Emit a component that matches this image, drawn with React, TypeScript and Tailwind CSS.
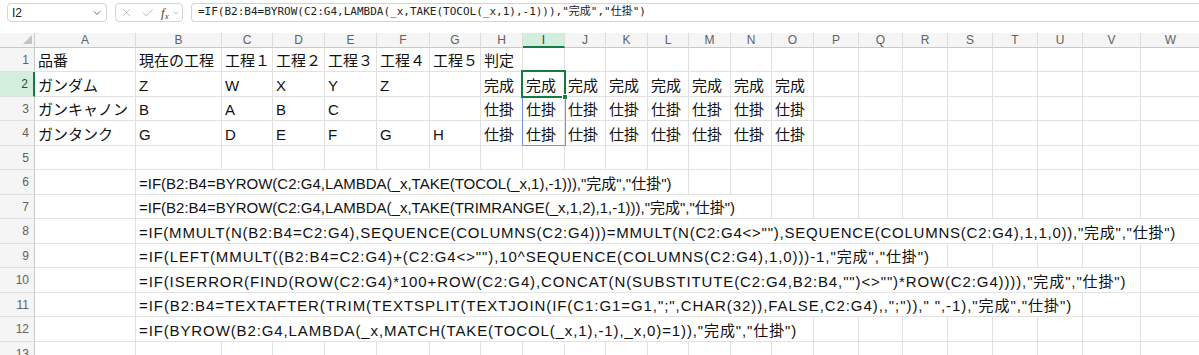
import { Check, ChevronDown, X } from "lucide-react";

const LETTERS = "ABCDEFGHIJKLMNOPQRSTUVW".split("");

const DATA: string[][] = [
  ["品番", "現在の工程", "工程１", "工程２", "工程３", "工程４", "工程５", "判定"],
  ["ガンダム", "Z", "W", "X", "Y", "Z", "", "完成", "完成", "完成", "完成", "完成", "完成", "完成", "完成"],
  ["ガンキャノン", "B", "A", "B", "C", "", "", "仕掛", "仕掛", "仕掛", "仕掛", "仕掛", "仕掛", "仕掛", "仕掛"],
  ["ガンタンク", "G", "D", "E", "F", "G", "H", "仕掛", "仕掛", "仕掛", "仕掛", "仕掛", "仕掛", "仕掛", "仕掛"],
  [],
];

// formula text in column B, how many columns it overflows across, and spacing to match Excel's font widths
const FORMULAS: [string, number, string][] = [
  ['=IF(B2:B4=BYROW(C2:G4,LAMBDA(_x,TAKE(TOCOL(_x,1),-1))),"完成","仕掛")', 11, "col-span-11"],
  ['=IF(B2:B4=BYROW(C2:G4,LAMBDA(_x,TAKE(TRIMRANGE(_x,1,2),1,-1))),"完成","仕掛")', 13, "col-span-13"],
  ['=IF(MMULT(N(B2:B4=C2:G4),SEQUENCE(COLUMNS(C2:G4)))=MMULT(N(C2:G4<>""),SEQUENCE(COLUMNS(C2:G4),1,1,0)),"完成","仕掛")', 22, "col-span-22 tracking-[0.76px]"],
  ['=IF(LEFT(MMULT((B2:B4=C2:G4)+(C2:G4<>""),10^SEQUENCE(COLUMNS(C2:G4),1,0)))-1,"完成","仕掛")', 17, "col-span-17 tracking-[0.9px]"],
  ['=IF(ISERROR(FIND(ROW(C2:G4)*100+ROW(C2:G4),CONCAT(N(SUBSTITUTE(C2:G4,B2:B4,"")<>"")*ROW(C2:G4)))),"完成","仕掛")', 21, "col-span-21 tracking-[0.88px]"],
  ['=IF(B2:B4=TEXTAFTER(TRIM(TEXTSPLIT(TEXTJOIN(IF(C1:G1=G1,";",CHAR(32)),FALSE,C2:G4),,";"))," ",-1),"完成","仕掛")', 20, "col-span-20 tracking-[0.93px]"],
  ['=IF(BYROW(B2:G4,LAMBDA(_x,MATCH(TAKE(TOCOL(_x,1),-1),_x,0)=1)),"完成","仕掛")', 14, "col-span-14 tracking-[0.88px]"],
];

const cellCls =
  "border-r border-b border-[#e1e1e1] flex items-center px-[3px] pt-[2px] whitespace-nowrap text-[15px] leading-none text-[#111]";

function RowHead({ n, active }: { n: number; active?: boolean }) {
  return (
    <div
      className={
        active
          ? "bg-[#d3eedd] border-r-2 border-r-[#137c43] border-b border-b-[#e1e1e1] flex items-center justify-end pr-[5px] text-[12px] text-[#0f5a2f]"
          : "bg-[#f5f5f5] border-r border-r-[#c9c9c9] border-b border-b-[#e1e1e1] flex items-center justify-end pr-[5px] text-[12px] text-[#616161]"
      }
    >
      {n}
    </div>
  );
}

function FormulaBar() {
  return (
    <div className="h-[33px] flex items-start pt-[3px] pl-[7px] gap-[8px] bg-white">
      <div className="w-[100px] h-[19px] shrink-0 border border-[#d4d4d4] rounded-[4px] flex items-center justify-between pl-[4px] pr-[3px]">
        <span className="text-[12px] text-[#222]">I2</span>
        <ChevronDown size={12} strokeWidth={1.6} className="text-[#444]" />
      </div>
      <div className="w-[68px] h-[19px] shrink-0 border border-[#d4d4d4] rounded-[4px] flex items-center pl-[4px] gap-[8px]">
        <X size={13} strokeWidth={1.3} className="text-[#a6a6a6]" />
        <Check size={14} strokeWidth={1.3} className="text-[#a6a6a6]" />
        <span className="flex items-end text-[#444] font-['Liberation_Serif',serif] italic leading-none -ml-[2px]">
          <span className="text-[13px]">f</span>
          <span className="text-[9px] -mb-[2px]">x</span>
        </span>
        <ChevronDown size={8} strokeWidth={1.6} className="text-[#888] -ml-[5px]" />
      </div>
      <div className="flex-1 h-[19px] border border-[#d4d4d4] border-r-0 rounded-l-[4px] flex items-center pl-[6px] text-[11px] text-[#222] whitespace-nowrap font-['DejaVu_Sans_Mono','Noto_Sans_CJK_JP',monospace]">
        =IF(B2:B4=BYROW(C2:G4,LAMBDA(_x,TAKE(TOCOL(_x,1),-1))),"完成","仕掛")
      </div>
    </div>
  );
}

export default function App() {
  return (
    <div className="relative w-[1199px] h-[355px] overflow-hidden bg-white font-['Liberation_Sans','Noto_Sans_CJK_JP',sans-serif]">
      <FormulaBar />
      <div className="grid grid-cols-[35px_101px_86px_51px_52px_52px_53px_51px_42px_42px_41px_42px_41px_42px_41px_42px_45px_44px_45px_45px_45px_45px_58px_60px] grid-rows-[15px_24px_25px_24px_25px_24px_25px_24px_25px_24px_25px_24px_25px_24px]">
        {/* corner */}
        <div className="bg-[#f5f5f5] border-r border-r-[#c9c9c9] border-b border-b-[#c9c9c9] flex items-end justify-end pr-[2px] pb-[3px]">
          <svg width="9" height="9" viewBox="0 0 9 9">
            <path d="M9 0 L9 9 L0 9 Z" fill="#c4c4c4" />
          </svg>
        </div>
        {LETTERS.map((l) =>
          l === "I" ? (
            <div
              key={l}
              className="bg-[#d3eedd] border-b-2 border-b-[#137c43] border-r border-r-[#dcdcdc] flex items-center justify-center text-[12px] text-[#0f5a2f]"
            >
              {l}
            </div>
          ) : (
            <div
              key={l}
              className="bg-[#f5f5f5] border-b border-b-[#c9c9c9] border-r border-r-[#dcdcdc] flex items-center justify-center text-[12px] text-[#616161]"
            >
              {l}
            </div>
          )
        )}

        {DATA.map((row, r) => (
          <>
            <RowHead key={`h${r}`} n={r + 1} active={r === 1} />
            {LETTERS.map((l, c) => (
              <div key={`${r}${l}`} className={cellCls}>
                {row[c] ?? ""}
              </div>
            ))}
          </>
        ))}

        {FORMULAS.map(([f, span, spanCls], i) => (
          <>
            <RowHead key={`fh${i}`} n={i + 6} />
            <div className={cellCls}></div>
            <div className={`${cellCls} ${spanCls}`}>{f}</div>
            {LETTERS.slice(1 + span).map((l) => (
              <div key={`f${i}${l}`} className={cellCls}></div>
            ))}
          </>
        ))}

        <RowHead n={13} />
        {LETTERS.map((l) => (
          <div key={`13${l}`} className={cellCls}></div>
        ))}
      </div>

      {/* active cell I2 */}
      <div className="absolute left-[521px] top-[70px] w-[45px] h-[28px] border-2 border-[#137c43] pointer-events-none" />
      <div className="absolute left-[562px] top-[94px] w-[6px] h-[6px] bg-[#137c43] border border-white pointer-events-none" />
      {/* spill range */}
      <div className="absolute left-[522px] top-[98px] w-[44px] h-[48px] border border-t-0 border-[#6d95d9] pointer-events-none" />
    </div>
  );
}
